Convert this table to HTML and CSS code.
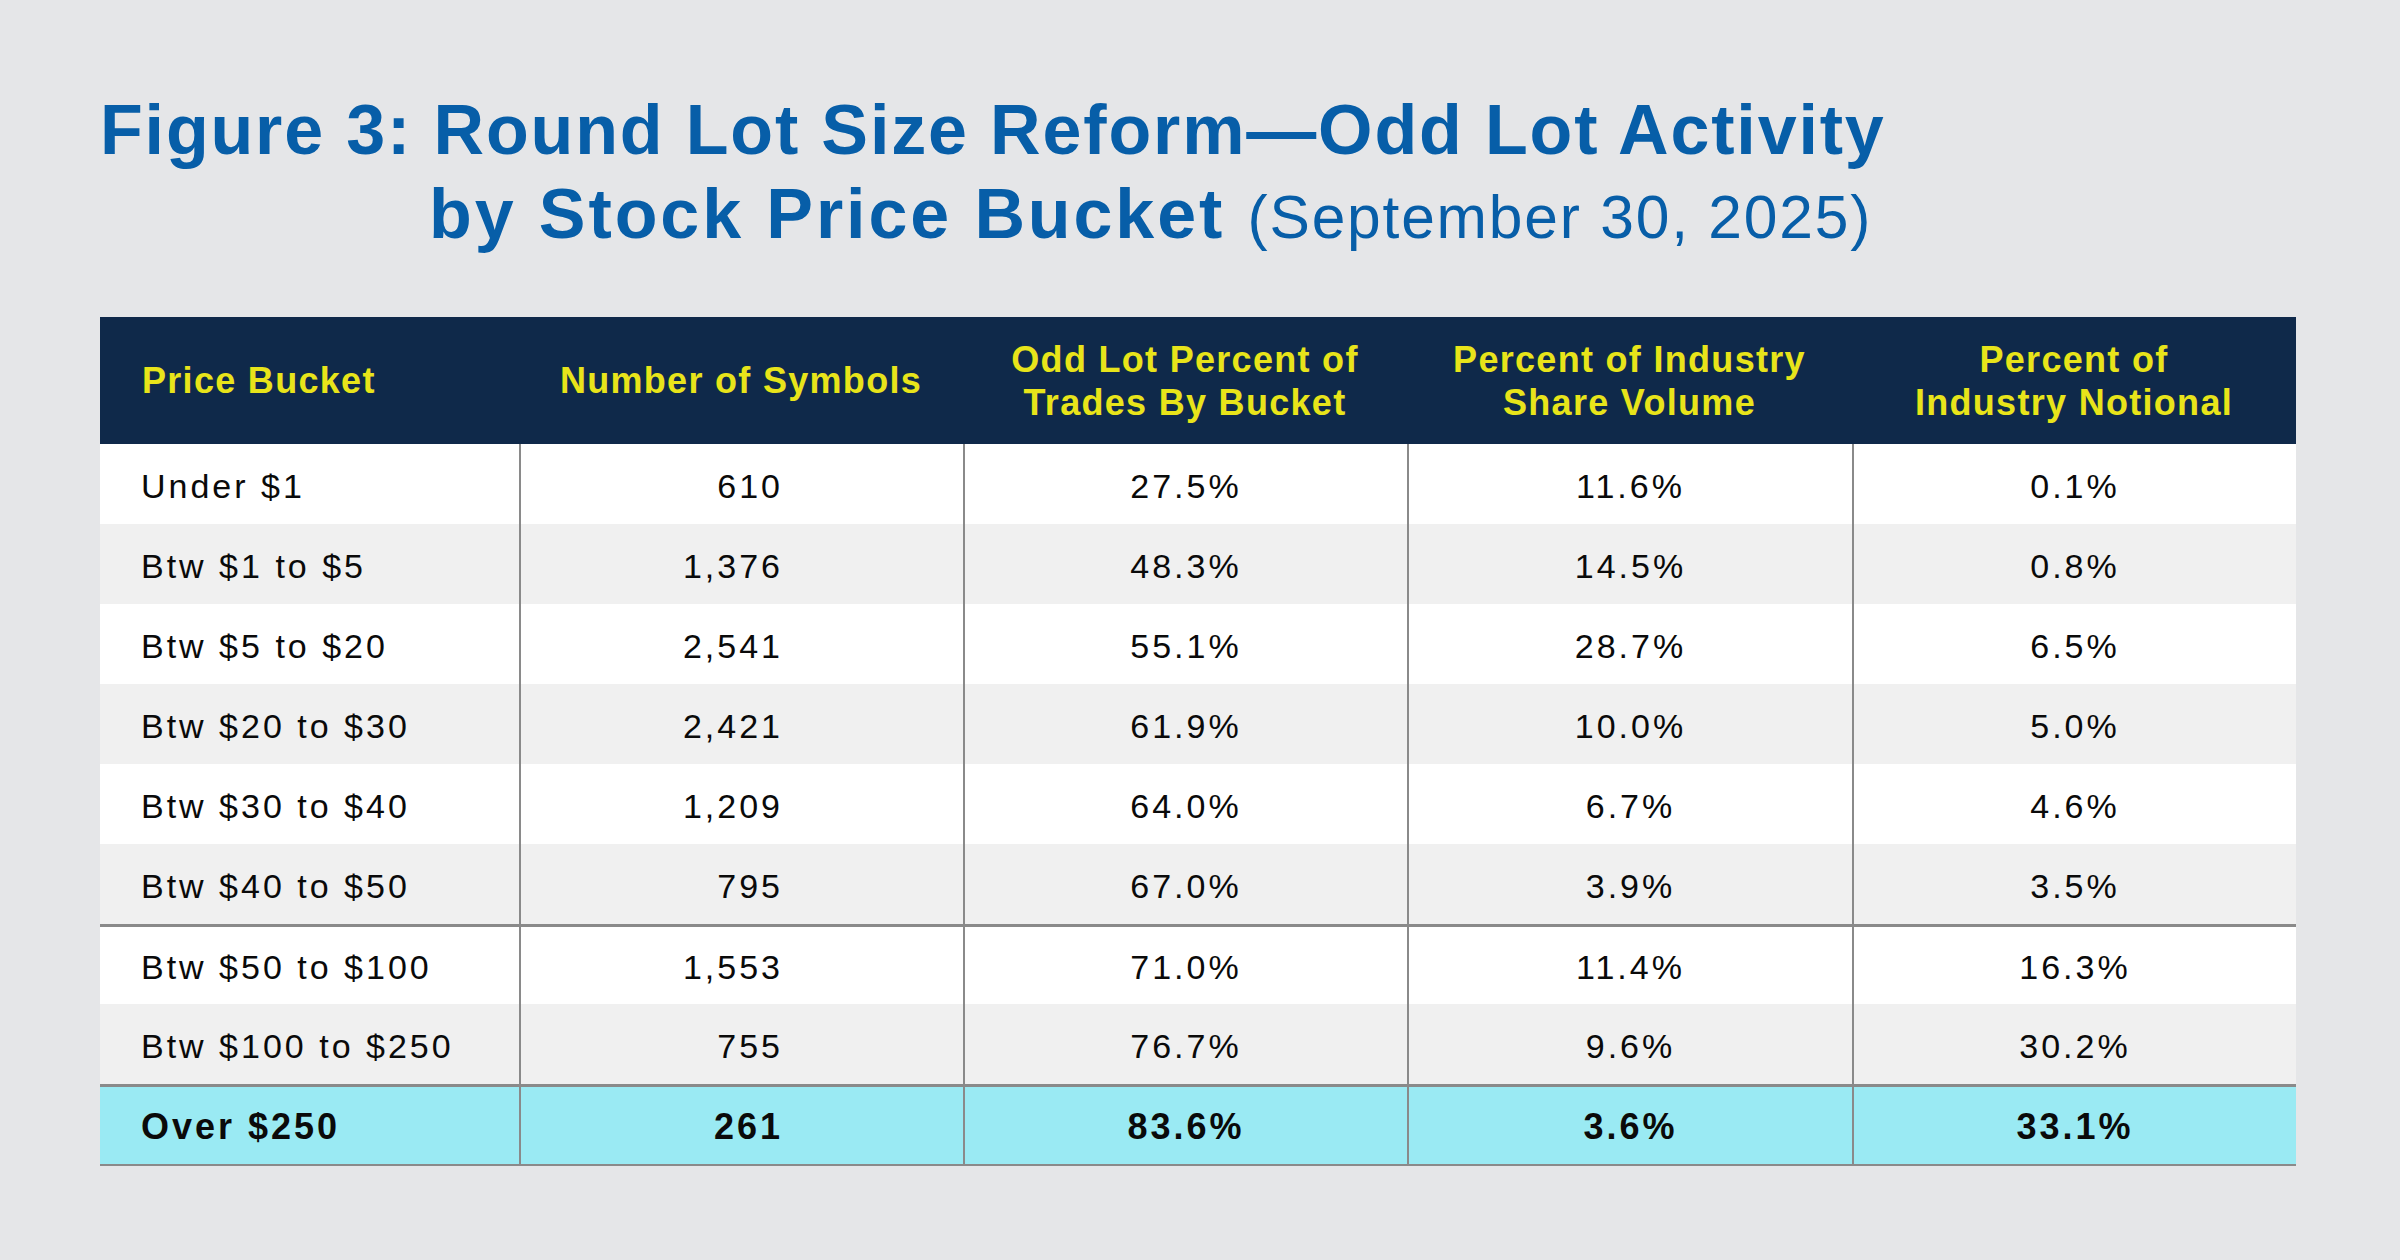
FILE: index.html
```html
<!DOCTYPE html>
<html lang="en">
<head>
<meta charset="utf-8">
<title>Figure 3: Round Lot Size Reform—Odd Lot Activity by Stock Price Bucket</title>
<link rel="stylesheet" href="styles.css">
</head>
<body>
<main class="page">
  <h1 class="title">
    <span class="title-line">Figure 3: Round Lot Size Reform—Odd Lot Activity</span>
    <span class="title-line title-line-2">by Stock Price Bucket <span class="title-date">(September 30, 2025)</span></span>
  </h1>

  <div class="table">
    <div class="row head">
      <div class="cell c1">Price Bucket</div>
      <div class="cell c2">Number of Symbols</div>
      <div class="cell">Odd Lot Percent of<br>Trades By Bucket</div>
      <div class="cell">Percent of Industry<br>Share Volume</div>
      <div class="cell">Percent of<br>Industry Notional</div>
    </div>
    <div class="row">
      <div class="cell c1">Under $1</div>
      <div class="cell c2">610</div>
      <div class="cell">27.5%</div>
      <div class="cell">11.6%</div>
      <div class="cell">0.1%</div>
    </div>
    <div class="row alt">
      <div class="cell c1">Btw $1 to $5</div>
      <div class="cell c2">1,376</div>
      <div class="cell">48.3%</div>
      <div class="cell">14.5%</div>
      <div class="cell">0.8%</div>
    </div>
    <div class="row">
      <div class="cell c1">Btw $5 to $20</div>
      <div class="cell c2">2,541</div>
      <div class="cell">55.1%</div>
      <div class="cell">28.7%</div>
      <div class="cell">6.5%</div>
    </div>
    <div class="row alt">
      <div class="cell c1">Btw $20 to $30</div>
      <div class="cell c2">2,421</div>
      <div class="cell">61.9%</div>
      <div class="cell">10.0%</div>
      <div class="cell">5.0%</div>
    </div>
    <div class="row">
      <div class="cell c1">Btw $30 to $40</div>
      <div class="cell c2">1,209</div>
      <div class="cell">64.0%</div>
      <div class="cell">6.7%</div>
      <div class="cell">4.6%</div>
    </div>
    <div class="row alt">
      <div class="cell c1">Btw $40 to $50</div>
      <div class="cell c2">795</div>
      <div class="cell">67.0%</div>
      <div class="cell">3.9%</div>
      <div class="cell">3.5%</div>
    </div>
    <div class="row sep">
      <div class="cell c1">Btw $50 to $100</div>
      <div class="cell c2">1,553</div>
      <div class="cell">71.0%</div>
      <div class="cell">11.4%</div>
      <div class="cell">16.3%</div>
    </div>
    <div class="row alt">
      <div class="cell c1">Btw $100 to $250</div>
      <div class="cell c2">755</div>
      <div class="cell">76.7%</div>
      <div class="cell">9.6%</div>
      <div class="cell">30.2%</div>
    </div>
    <div class="row sep highlight">
      <div class="cell c1">Over $250</div>
      <div class="cell c2">261</div>
      <div class="cell">83.6%</div>
      <div class="cell">3.6%</div>
      <div class="cell">33.1%</div>
    </div>
  </div>
</main>
</body>
</html>
```

FILE: styles.css
```css
* { box-sizing: border-box; }

html, body {
  margin: 0;
  padding: 0;
  background: #e5e6e8;
}

body {
  font-family: "Liberation Sans", Arial, sans-serif;
  color: #0a0a0a;
}

.page {
  width: 2400px;
  height: 1260px;
  padding: 88px 104px 0 100px;
}

.title {
  margin: 0;
  color: #075ea8;
  font-size: 70px;
  font-weight: 700;
  line-height: 84px;
  letter-spacing: 1.85px;
}

.title-line {
  display: block;
  white-space: nowrap;
}

.title-line-2 {
  padding-left: 329px;
  letter-spacing: 2.9px;
}

.title-date {
  font-size: 60.5px;
  font-weight: 400;
  letter-spacing: 1.8px;
}

.table {
  margin-top: 58px;
  width: 2196px;
  border-bottom: 2px solid #8a8a8a;
}

.row {
  display: grid;
  grid-template-columns: 419px 444px 444px 445px 444px;
  height: 80px;
  background: #ffffff;
  font-size: 34px;
  letter-spacing: 3px;
  line-height: 40px;
}

.row.alt { background: #f0f0f0; }

.row.sep { border-top: 3px solid #8a8a8a; }

.row.highlight {
  background: #9aeaf3;
  font-weight: 700;
  font-size: 36px;
  letter-spacing: 3px;
}

.cell {
  display: flex;
  align-items: center;
  justify-content: center;
  text-align: center;
  padding-top: 3px;
  border-left: 2px solid #8a8a8a;
  white-space: nowrap;
}

.cell.c1 {
  justify-content: flex-start;
  text-align: left;
  padding-left: 41px;
  border-left: none;
}

.cell.c2 {
  justify-content: flex-end;
  text-align: right;
  padding-right: 180px;
}

.row.head {
  height: 127px;
  background: #0f294a;
  color: #e8e41a;
  font-size: 36px;
  font-weight: 700;
  letter-spacing: 1.3px;
  line-height: 43px;
}

.row.head .cell {
  border-left: none;
  padding-top: 0;
}

.row.head .cell.c1 {
  padding-left: 42px;
}

.row.head .cell.c2 {
  justify-content: center;
  text-align: center;
  padding-right: 0;
}
```
